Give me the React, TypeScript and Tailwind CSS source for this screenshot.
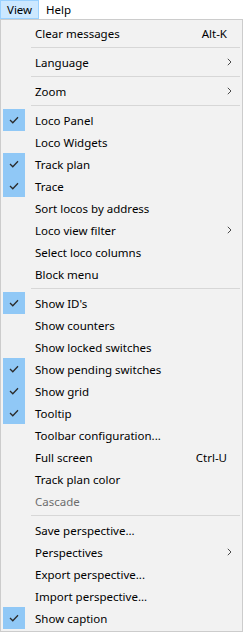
import { ReactNode } from "react";

type Entry =
  | { sep: true }
  | {
      sep?: false;
      label: string;
      checked?: boolean;
      shortcut?: string;
      sub?: boolean;
      disabled?: boolean;
    };

const items: Entry[] = [
  { label: "Clear messages", shortcut: "Alt-K" },
  { sep: true },
  { label: "Language", sub: true },
  { sep: true },
  { label: "Zoom", sub: true },
  { sep: true },
  { label: "Loco Panel", checked: true },
  { label: "Loco Widgets" },
  { label: "Track plan", checked: true },
  { label: "Trace", checked: true },
  { label: "Sort locos by address" },
  { label: "Loco view filter", sub: true },
  { label: "Select loco columns" },
  { label: "Block menu" },
  { sep: true },
  { label: "Show ID's", checked: true },
  { label: "Show counters" },
  { label: "Show locked switches" },
  { label: "Show pending switches", checked: true },
  { label: "Show grid", checked: true },
  { label: "Tooltip", checked: true },
  { label: "Toolbar configuration..." },
  { label: "Full screen", shortcut: "Ctrl-U" },
  { label: "Track plan color" },
  { label: "Cascade", disabled: true },
  { sep: true },
  { label: "Save perspective..." },
  { label: "Perspectives", sub: true },
  { label: "Export perspective..." },
  { label: "Import perspective..." },
  { label: "Show caption", checked: true },
];

function Check() {
  return (
    <svg width="10" height="8" viewBox="0 0 10 8" className="block">
      <path d="M1 4 L3.8 6.8 L9 1.3" fill="none" stroke="#2b2b2b" strokeWidth="1.3" />
    </svg>
  );
}

function Chevron() {
  return (
    <svg width="5" height="8" viewBox="0 0 5 8" className="block">
      <path d="M0.8 0.8 L4 4 L0.8 7.2" fill="none" stroke="#4a4a4a" strokeWidth="1" />
    </svg>
  );
}

function Row({ children }: { children: ReactNode }) {
  return <div className="flex h-[22px] items-center">{children}</div>;
}

export default function App() {
  return (
    <div
      className="w-[246px] h-[632px] bg-white text-[11.5px] text-black leading-none select-none"
      style={{ fontFamily: '"Segoe UI", "Noto Sans", sans-serif' }}
    >
      <div className="flex h-[19px] items-stretch">
        <div className="flex w-[39px] items-center border border-[#99d1ff] bg-[#cce8ff] pl-[6px] pt-px">View</div>
        <div className="flex items-center pl-[7px] pt-px">Help</div>
      </div>
      <div className="w-[243px] h-[613px] border border-[#cccccc] bg-[#f2f2f2] p-[2px]">
        {items.map((it, i) =>
          it.sep ? (
            <div key={i} className="flex h-[7px] items-center pl-[28px]">
              <div className="h-px w-full bg-[#d7d7d7]" />
            </div>
          ) : (
            <Row key={i}>
              <div className="flex w-[22px] h-[22px] items-center justify-center shrink-0">
                {it.checked && (
                  <div className="flex w-[22px] h-[22px] items-center justify-center bg-[#90c8f6]">
                    <Check />
                  </div>
                )}
              </div>
              <div className={"pl-[10px] pt-px flex-1 " + (it.disabled ? "text-[#6d6d6d]" : "")}>{it.label}</div>
              {it.shortcut && <div className="pr-[13px] pt-px">{it.shortcut}</div>}
              {it.sub && (
                <div className="pr-[8px]">
                  <Chevron />
                </div>
              )}
            </Row>
          )
        )}
      </div>
    </div>
  );
}
